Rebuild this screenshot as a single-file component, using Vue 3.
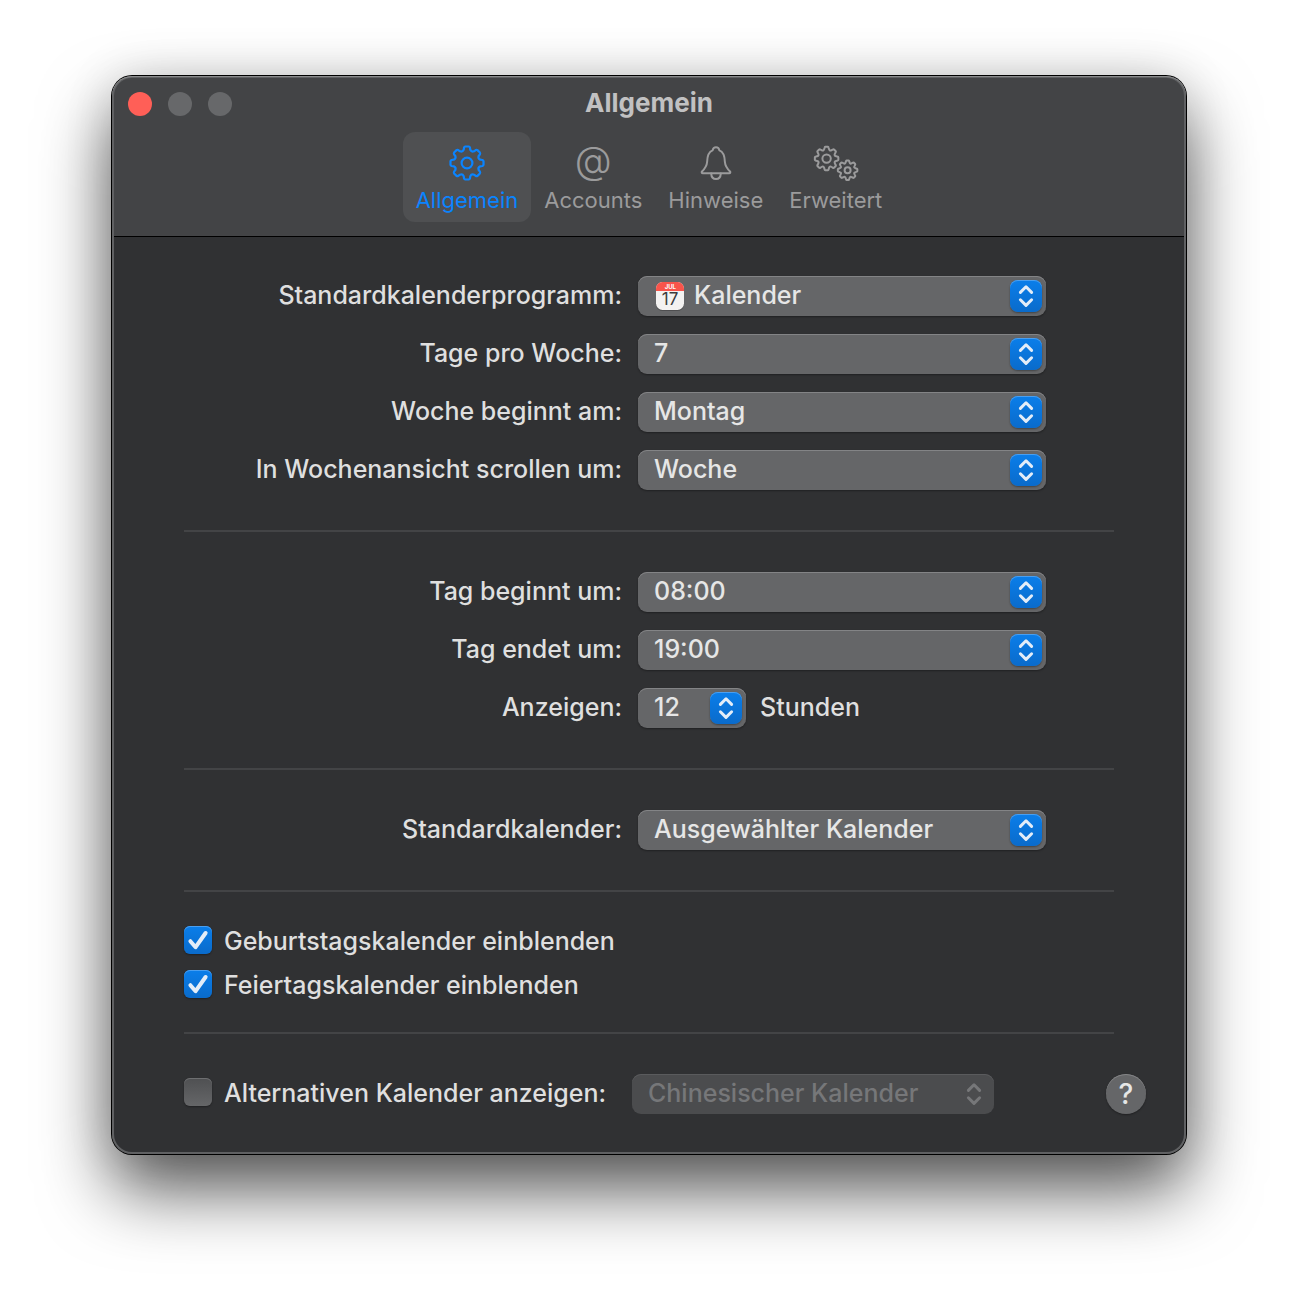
<template>
  <main class="desktop">
    <section class="window" aria-labelledby="window-title">
      <header class="titlebar">
        <div class="title-row">
          <div class="lights">
            <button class="light close" aria-label="Schließen"></button>
            <button class="light" aria-label="Minimieren" disabled></button>
            <button class="light" aria-label="Zoomen" disabled></button>
          </div>
          <h1 id="window-title" class="title">Allgemein</h1>
        </div>

        <nav class="tabs">
          <button
            v-for="tab in tabs"
            :key="tab.id"
            class="tab"
            :class="{ active: tab.id === activeTab }"
            @click="activeTab = tab.id"
          >
            <svg v-if="tab.id === 'general'" class="tab-icon" width="38" height="38" viewBox="0 0 38 38">
              <path :d="gearPath(19, 19, 16.6, 12.8)" stroke-width="2.2" />
              <circle cx="19" cy="19" r="5.4" stroke-width="2.2" />
            </svg>
            <span v-else-if="tab.id === 'accounts'" class="tab-icon at">@</span>
            <svg v-else-if="tab.id === 'alerts'" class="tab-icon" width="38" height="38" viewBox="0 0 38 38">
              <path
                stroke-width="2"
                d="M5.8 29.2C4.6 29.2 4.4 28.2 5 27.4C8.4 24.2 9.8 22.2 10.1 18C10.3 12.4 11 8 15.6 6.4C16 4.2 17.2 3.2 19 3.2C20.8 3.2 22 4.2 22.4 6.4C27 8 27.7 12.4 27.9 18C28.2 22.2 29.6 24.2 33 27.4C33.6 28.2 33.4 29.2 32.2 29.2Z"
              />
              <path stroke-width="2" d="M14.2 29.6C14.4 33 16.2 35 19 35C21.8 35 23.6 33 23.8 29.6" />
            </svg>
            <svg v-else class="tab-icon" width="46" height="38" viewBox="0 0 46 38">
              <path :d="gearPath(13.6, 14.6, 11.8, 9)" stroke-width="2" />
              <circle cx="13.6" cy="14.6" r="4.2" stroke-width="2" />
              <path :d="gearPath(34.6, 26.2, 9.8, 7.4)" stroke-width="2" />
              <circle cx="34.6" cy="26.2" r="3" stroke-width="2" />
            </svg>
            <span class="tab-label">{{ tab.label }}</span>
          </button>
        </nav>
      </header>

      <div class="content">
        <template v-for="(group, i) in groups" :key="i">
          <div class="group">
            <div v-for="field in group" :key="field.id" class="row">
              <label class="label" :for="field.id">{{ field.label }}</label>
              <div class="control">
                <div class="popup" :class="{ small: field.suffix, 'with-icon': field.icon }">
                  <svg v-if="field.icon" class="cal-icon" width="32" height="32" viewBox="0 0 32 32">
                    <defs>
                      <clipPath id="cal-clip"><rect x="2" y="2" width="28" height="28" rx="6.5" /></clipPath>
                    </defs>
                    <rect x="2" y="2.8" width="28" height="28" rx="6.5" fill="#000" opacity="0.3" />
                    <g clip-path="url(#cal-clip)">
                      <rect x="2" y="2" width="28" height="28" fill="#f3f2f1" />
                      <rect x="2" y="2" width="28" height="9" fill="#f9544b" />
                    </g>
                    <text x="16.3" y="9.2" class="cal-month">JUL</text>
                    <text x="16" y="25" class="cal-day">17</text>
                  </svg>
                  <select :id="field.id" v-model="field.value" class="select">
                    <option v-for="opt in field.options" :key="opt">{{ opt }}</option>
                  </select>
                  <span class="stepper">
                    <svg width="32" height="32" viewBox="0 0 32 32">
                      <path d="M10.4 12.4L16 6.8L21.6 12.4M10.4 19.8L16 25.4L21.6 19.8" />
                    </svg>
                  </span>
                </div>
                <span v-if="field.suffix">{{ field.suffix }}</span>
              </div>
            </div>
          </div>
          <hr class="divider" />
        </template>

        <div class="checks">
          <label v-for="check in checks" :key="check.label" class="check">
            <span class="box">
              <input v-model="check.checked" type="checkbox" />
              <svg v-if="check.checked" width="28" height="28" viewBox="0 0 28 28">
                <path d="M6.4 15.2L11.6 21.2L21.6 7" />
              </svg>
            </span>
            {{ check.label }}
          </label>
        </div>
        <hr class="divider" />
      </div>

      <footer class="footer">
        <label class="check alt">
          <span class="box">
            <input v-model="altEnabled" type="checkbox" />
            <svg v-if="altEnabled" width="28" height="28" viewBox="0 0 28 28">
              <path d="M6.4 15.2L11.6 21.2L21.6 7" />
            </svg>
          </span>
          Alternativen Kalender anzeigen:
        </label>
        <div class="popup alt-popup" :class="{ disabled: !altEnabled }">
          <select v-model="altCalendar" class="select" aria-label="Alternativer Kalender" :disabled="!altEnabled">
            <option>Chinesischer Kalender</option>
          </select>
          <span class="stepper">
            <svg width="32" height="32" viewBox="0 0 32 32">
              <path d="M10.4 12.4L16 6.8L21.6 12.4M10.4 19.8L16 25.4L21.6 19.8" />
            </svg>
          </span>
        </div>
        <button class="help" aria-label="Hilfe">?</button>
      </footer>
    </section>
  </main>
</template>

<script setup>
import { ref, reactive } from 'vue'

const tabs = [
  { id: 'general', label: 'Allgemein' },
  { id: 'accounts', label: 'Accounts' },
  { id: 'alerts', label: 'Hinweise' },
  { id: 'advanced', label: 'Erweitert' },
]
const activeTab = ref('general')

const groups = reactive([
  [
    { id: 'app', label: 'Standardkalenderprogramm:', value: 'Kalender', options: ['Kalender'], icon: true },
    { id: 'days', label: 'Tage pro Woche:', value: '7', options: ['5', '7'] },
    { id: 'first-day', label: 'Woche beginnt am:', value: 'Montag', options: ['Montag', 'Samstag', 'Sonntag'] },
    { id: 'scroll', label: 'In Wochenansicht scrollen um:', value: 'Woche', options: ['Tag', 'Woche'] },
  ],
  [
    { id: 'day-start', label: 'Tag beginnt um:', value: '08:00', options: ['07:00', '08:00', '09:00'] },
    { id: 'day-end', label: 'Tag endet um:', value: '19:00', options: ['18:00', '19:00', '20:00'] },
    { id: 'hours', label: 'Anzeigen:', value: '12', options: ['8', '10', '12'], suffix: 'Stunden' },
  ],
  [
    {
      id: 'default-calendar',
      label: 'Standardkalender:',
      value: 'Ausgewählter Kalender',
      options: ['Ausgewählter Kalender'],
    },
  ],
])

const checks = reactive([
  { label: 'Geburtstagskalender einblenden', checked: true },
  { label: 'Feiertagskalender einblenden', checked: true },
])

const altEnabled = ref(false)
const altCalendar = ref('Chinesischer Kalender')

/** Gear outline with eight teeth and rounded valleys */
function gearPath(cx, cy, outer, inner) {
  const pt = (deg, r) => {
    const a = ((deg - 90) * Math.PI) / 180
    return `${(cx + r * Math.cos(a)).toFixed(2)} ${(cy + r * Math.sin(a)).toFixed(2)}`
  }
  let d = ''
  for (let i = 0; i < 8; i++) {
    const t = i * 45
    d += `${i ? 'L' : 'M'}${pt(t - 11, outer - 1)}`
    d += `Q${pt(t - 9, outer)} ${pt(t - 6, outer)}L${pt(t + 6, outer)}Q${pt(t + 9, outer)} ${pt(t + 11, outer - 1)}`
    d += `L${pt(t + 14, inner + 0.8)}Q${pt(t + 22.5, inner - 1.2)} ${pt(t + 31, inner + 0.8)}`
  }
  return d + 'Z'
}
</script>

<style>
body {
  margin: 0;
  background: #fff;
}
</style>

<style scoped>
.desktop {
  padding: 76px 112px 148px;
  overflow: hidden;
  font-family: Inter, 'Liberation Sans', sans-serif;
  font-size: 25px;
  font-weight: 500;
  line-height: 38px;
  color: #dfdfdf;
}
.window {
  position: relative;
  border-radius: 20px;
  background: #303133;
  box-shadow: 0 0 0 1px #000, 0 0 50px rgba(0, 0, 0, 0.12), 0 36px 70px rgba(0, 0, 0, 0.66);
}
.window::after {
  content: '';
  position: absolute;
  inset: 0;
  border-radius: 20px;
  box-shadow: inset 0 1px 0 #8a8b8c, inset 0 0 0 2px #606163;
  pointer-events: none;
}
button,
select {
  font: inherit;
  border: 0;
  padding: 0;
  margin: 0;
  cursor: default;
}

.titlebar {
  height: 160px;
  border-bottom: 1px solid #000;
  border-radius: 20px 20px 0 0;
  background: #434446;
}
.title-row {
  display: grid;
  grid-template-columns: 1fr auto 1fr;
  align-items: center;
  height: 56px;
  padding: 0 16px;
}
.lights {
  display: flex;
  gap: 16px;
}
.light {
  width: 24px;
  height: 24px;
  border-radius: 50%;
  background: #67686a;
}
.light.close {
  background: #ff5f57;
}
.title {
  margin: 0;
  padding-bottom: 2px;
  font-size: 26px;
  font-weight: 700;
  color: #c1c1c2;
}
.tabs {
  display: flex;
  justify-content: center;
}
.tab {
  display: flex;
  flex-direction: column;
  align-items: center;
  height: 90px;
  padding: 12px 13px 0;
  border-radius: 12px;
  background: transparent;
  color: #9b9b9c;
}
.tab.active {
  background: #4f5052;
  color: #0a84ff;
}
.tab-icon {
  height: 38px;
  fill: none;
  stroke: currentColor;
  stroke-linejoin: round;
  stroke-linecap: round;
}
.tab-icon.at {
  font-size: 38px;
  font-weight: 300;
  line-height: 32px;
}
.tab-label {
  font-size: 22px;
  font-weight: 400;
  line-height: 36px;
}

.content {
  padding: 39px 72px 0;
}
.group {
  display: grid;
  gap: 18px;
}
.row {
  display: grid;
  grid-template-columns: 1fr 476px;
  gap: 16px;
}
.label {
  text-align: right;
}
.control {
  display: flex;
  gap: 14px;
}
.popup {
  position: relative;
  width: 408px;
  height: 40px;
}
.popup.small {
  width: 108px;
}
.select {
  appearance: none;
  display: block;
  width: 100%;
  height: 40px;
  padding: 0 44px 2px 16px;
  border-radius: 9px;
  background: #656668;
  box-shadow: inset 0 1px 0 #838486, 0 1px 2px rgba(0, 0, 0, 0.35);
  color: #e6e6e6;
}
.small .select {
  padding-right: 36px;
}
.with-icon .select {
  padding-left: 56px;
}
.cal-icon {
  position: absolute;
  left: 16px;
  top: 4px;
  pointer-events: none;
}
.cal-month {
  font-size: 6px;
  font-weight: 700;
  fill: #fff;
  text-anchor: middle;
}
.cal-day {
  font-size: 17px;
  font-weight: 400;
  fill: #3c3c3e;
  text-anchor: middle;
}
.stepper {
  position: absolute;
  top: 4px;
  right: 4px;
  width: 32px;
  height: 32px;
  border-radius: 8px;
  background: linear-gradient(#0a7eea, #0a6bcb);
  box-shadow: inset 0 1px 0 #4a9ff0, 0 1px 2px rgba(0, 0, 0, 0.35);
  pointer-events: none;
}
.stepper svg {
  display: block;
  fill: none;
  stroke: #e3edf8;
  stroke-width: 3;
  stroke-linecap: round;
  stroke-linejoin: round;
}
.disabled .select {
  background: #4b4c4e;
  box-shadow: inset 0 1px 0 #5a5b5d;
  color: #767779;
  opacity: 1;
}
.disabled .stepper {
  background: none;
  box-shadow: none;
}
.disabled .stepper svg {
  stroke: #767779;
}
.divider {
  height: 2px;
  margin: 40px 0;
  border: 0;
  background: #434446;
}

.checks {
  display: grid;
  gap: 6px;
  margin: -10px 0 -12px;
}
.check {
  display: flex;
  align-items: center;
  gap: 12px;
}
.box {
  display: grid;
  width: 28px;
  height: 28px;
  margin-bottom: 2px;
}
.box > * {
  grid-area: 1 / 1;
}
.box input {
  appearance: none;
  width: 28px;
  height: 28px;
  margin: 0;
  border-radius: 6px;
  background: linear-gradient(#4f5052, #656668);
  box-shadow: inset 0 1px 0 #6e6f71, 0 1px 2px rgba(0, 0, 0, 0.35);
}
.box input:checked {
  background: linear-gradient(#0a7eea, #0a6bcb);
  box-shadow: inset 0 1px 0 #4a9ff0, 0 1px 2px rgba(0, 0, 0, 0.35);
}
.box svg {
  fill: none;
  stroke: #e3edf8;
  stroke-width: 4;
  stroke-linecap: round;
  stroke-linejoin: round;
  pointer-events: none;
}

.footer {
  display: flex;
  align-items: flex-start;
  padding: 0 40px 40px 72px;
}
.alt {
  width: 448px;
}
.alt-popup {
  width: 362px;
}
.help {
  width: 40px;
  height: 40px;
  margin-left: auto;
  border-radius: 50%;
  background: #656668;
  box-shadow: inset 0 1px 0 #838486, 0 1px 2px rgba(0, 0, 0, 0.35);
  color: #e6e6e6;
  font-size: 28px;
  font-weight: 500;
  line-height: 40px;
}
</style>
